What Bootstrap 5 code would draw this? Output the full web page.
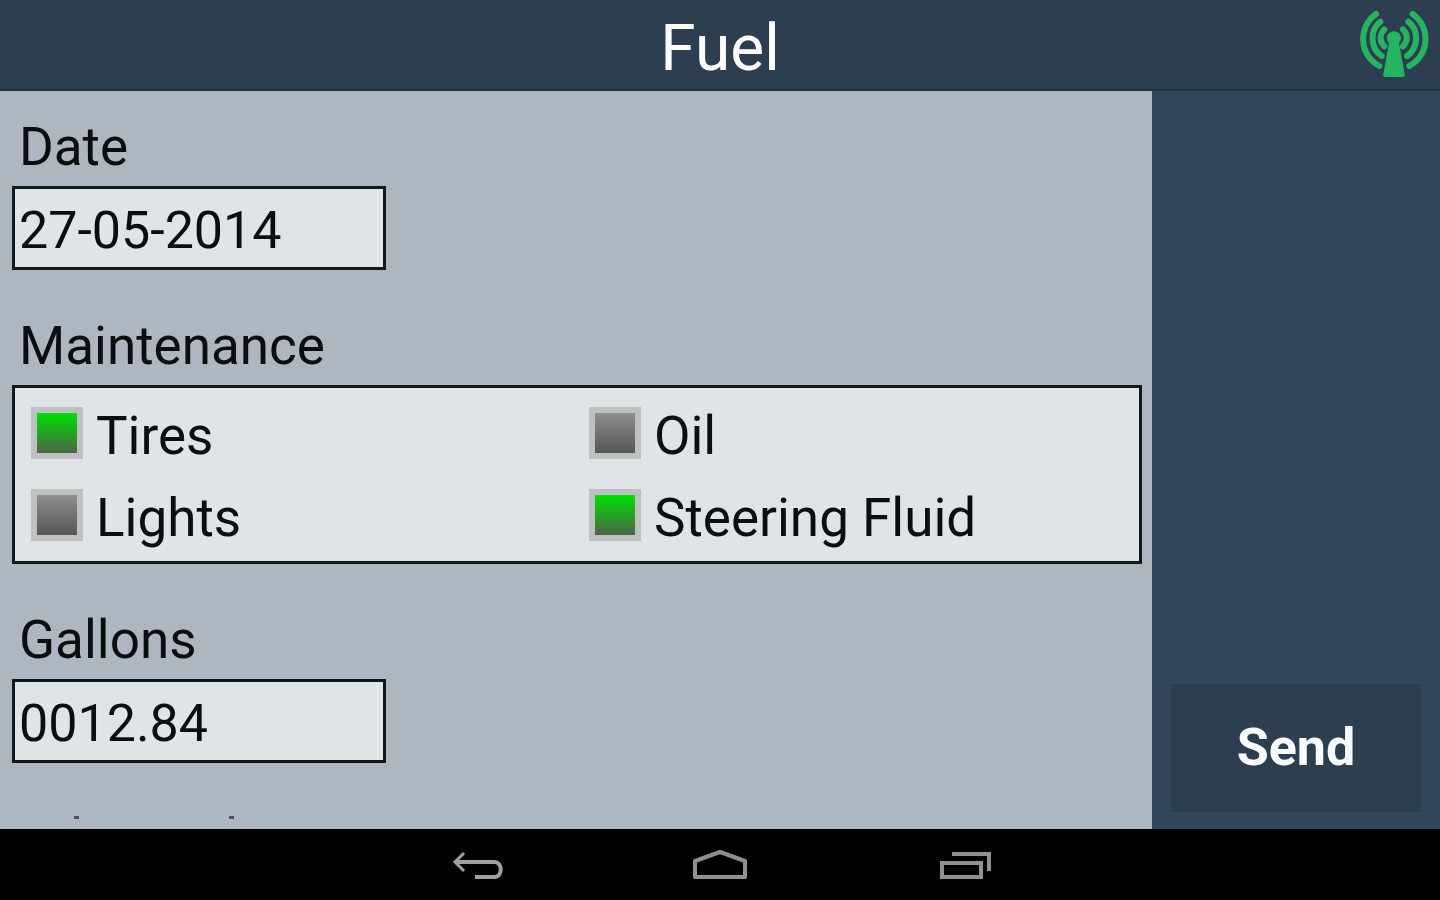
<!DOCTYPE html>
<html lang="en">
<head>
<meta charset="utf-8">
<meta name="viewport" content="width=device-width, initial-scale=1">
<title>Fuel</title>
<link href="https://cdn.jsdelivr.net/npm/bootstrap@5.3.0/dist/css/bootstrap.min.css" rel="stylesheet">
<style>
  body { font-family: Roboto, "Liberation Sans", sans-serif; font-size: 52px; line-height: 60px; color: #0b0d0f; background: #000; }
  .topbar { background: #2c3e50; height: 91px; border-bottom: 2px solid #21354a; }
  .topbar h1 { font-size: 64px; line-height: 76px; font-weight: 400; padding-top: 11px; }
  .signal { top: 8px; right: 10px; }
  .form-pane { width: 80%; background: #aeb6c0; padding: 26px 10px 0 12px; }
  .side-pane { width: 20%; background: #32475b; padding: 17px 18px; }
  .field-label { padding-left: 7px; margin-bottom: 9px; font-size: 53px; line-height: 60px; }
  .field-group { margin-bottom: 46px; }
  .field-box { background: #dfe4e6; border: 3px solid #15181a; border-radius: 0; }
  input.field-box { width: 374px; height: 84px; padding: 4px 4px 0; color: #0b0d0f; }
  .checks { padding: 15px 0 16px 8px; row-gap: 22px; margin: 0; font-size: 53px; }
  .check-item { gap: 13px; height: 60px; padding: 0 0 0 8px; }
  .check-item label { white-space: nowrap; padding-top: 6px; }
  .tick { appearance: none; width: 52px; height: 52px; margin: 0; border: 6px solid #bfc0c0; background: linear-gradient(#8e8e8e, #555); flex: none; }
  .tick:checked { background: linear-gradient(#00e000, #4a6548); }
  .send { background: #2c3e50; color: #f8fbff; height: 128px; font-size: 52px; font-weight: 700; border: 0; border-radius: 0; }
  .send:hover { background: #263646; color: #fff; }
  .navkeys { height: 71px; background: #000; gap: 188px; padding-top: 2px; }
  .navkeys button { background: none; border: 0; padding: 0; width: 56px; line-height: 0; }
</style>
</head>
<body class="vh-100 d-flex flex-column overflow-hidden">
<header class="topbar position-relative text-center text-white flex-shrink-0">
  <h1 class="m-0">Fuel</h1>
  <svg class="signal position-absolute" width="72" height="70" viewBox="55 24 216 210" role="img" aria-label="Connected">
    <g fill="none" stroke="#27b462" stroke-width="18" stroke-linecap="round">
      <path d="M109 42C57 79 55 161 119 198M122 65C90 91 90 142 126 168M134 88C119 103 119 124 134 139"/>
      <path d="M219 42C271 79 273 161 209 198M206 65C238 91 238 142 202 168M190 88C205 103 205 124 190 139"/>
    </g>
    <path fill="#27b462" d="M163 94c12 0 21 9 21 20 0 6-3 11-6 14l17 94q2 9-6 9h-52q-8 0-6-9l17-94c-4-3-6-8-6-14 0-11 9-20 21-20z"/>
  </svg>
</header>
<main class="d-flex flex-grow-1 overflow-hidden">
  <form id="fuel" class="form-pane overflow-hidden">
    <div class="field-group">
      <label class="field-label d-block" for="date">Date</label>
      <input class="field-box d-block" id="date" type="text" value="27-05-2014">
    </div>
    <fieldset class="field-group">
      <legend class="field-label float-none">Maintenance</legend>
      <div class="checks field-box row">
        <div class="check-item col-6 d-flex align-items-center"><input class="tick" type="checkbox" id="tires" checked><label for="tires">Tires</label></div>
        <div class="check-item col-6 d-flex align-items-center"><input class="tick" type="checkbox" id="oil"><label for="oil">Oil</label></div>
        <div class="check-item col-6 d-flex align-items-center"><input class="tick" type="checkbox" id="lights"><label for="lights">Lights</label></div>
        <div class="check-item col-6 d-flex align-items-center"><input class="tick" type="checkbox" id="steering" checked><label for="steering">Steering Fluid</label></div>
      </div>
    </fieldset>
    <div class="field-group">
      <label class="field-label d-block" for="gallons">Gallons</label>
      <input class="field-box d-block" id="gallons" type="text" value="0012.84">
    </div>
    <svg class="d-block" width="240" height="20" aria-hidden="true"><path fill="#4d535a" d="M62 7h5v3h-5zM217 7h5v3h-5z"/></svg>
  </form>
  <aside class="side-pane d-flex flex-column justify-content-end">
    <button class="btn send w-100" type="submit" form="fuel">Send</button>
  </aside>
</main>
<nav class="navkeys d-flex justify-content-center align-items-center flex-shrink-0" aria-label="System">
  <button type="button" aria-label="Back"><svg width="56" height="36" viewBox="0 0 56 36" fill="none" stroke="#a0a0a0" stroke-width="4"><path d="M7 14H46C55 14 55 29 46 29H27"/><path d="M16 5L7 14L16 23" stroke-width="3"/></svg></button>
  <button type="button" aria-label="Home"><svg width="56" height="36" viewBox="0 0 56 36" fill="none" stroke="#909090" stroke-width="4" stroke-linejoin="round"><path d="M3 29V13L28 4L53 13V29Z"/></svg></button>
  <button type="button" aria-label="Recent apps"><svg width="56" height="36" viewBox="0 0 56 36" fill="none" stroke="#909090" stroke-width="4"><path d="M6 15H45V29H6Z"/><path d="M16 6H53V23"/></svg></button>
</nav>
<script src="https://cdn.jsdelivr.net/npm/bootstrap@5.3.0/dist/js/bootstrap.bundle.min.js"></script>
</body>
</html>
